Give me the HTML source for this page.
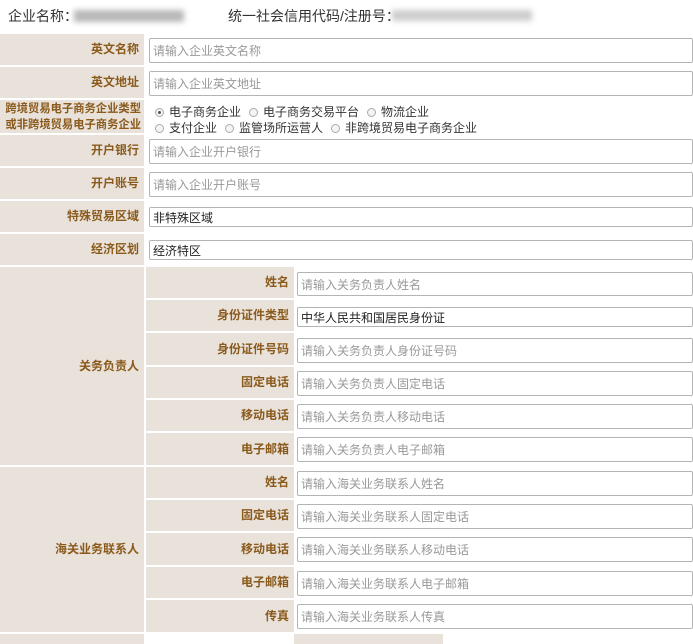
<!DOCTYPE html>
<html><head><meta charset="utf-8"><style>
body{margin:0;width:693px;height:639px;overflow:hidden;background:#fff;font-family:"Liberation Sans","Noto Sans CJK SC",sans-serif;position:relative}
.a{position:absolute}
.lb{position:absolute;background:#e9e2da;color:#8a5a1c;font-weight:bold;font-size:12px;display:flex;align-items:center;justify-content:flex-end;box-sizing:border-box;padding-right:5px;text-align:right;line-height:17px;white-space:nowrap}
.in{position:absolute;border:1px solid #b4b4b4;box-sizing:border-box;font-size:12px;color:#999;display:flex;align-items:center;padding-left:3px;background:#fff;border-radius:2px}
.v{color:#222}
.r{display:inline-block;width:9px;height:9px;border:1px solid #aaa;border-radius:50%;background:#f4f4f4;vertical-align:-1px;margin-right:5px;box-sizing:border-box;position:relative}
.r.on::after{content:"";position:absolute;left:2px;top:2px;width:3px;height:3px;border-radius:50%;background:#555}
.rt{font-size:12px;color:#333;position:absolute;left:155px;white-space:nowrap}
.rt span{margin-right:8px}
</style></head><body>
<div class="a" style="left:8px;top:6px;font-size:14px;color:#333">企业名称：</div>
<div class="a" style="left:74px;top:10px;width:110px;height:12px;background:#999;filter:blur(3px);opacity:.7"></div>
<div class="a" style="left:228px;top:6px;font-size:14px;color:#333">统一社会信用代码/注册号：</div>
<div class="a" style="left:392px;top:10px;width:140px;height:11px;background:#aaa;filter:blur(3px);opacity:.6"></div>

<div class="lb" style="left:0;top:34px;width:144px;height:31px">英文名称</div>
<div class="in" style="left:149px;top:38px;width:544px;height:25px">请输入企业英文名称</div>
<div class="lb" style="left:0;top:67px;width:144px;height:31px">英文地址</div>
<div class="in" style="left:149px;top:71px;width:544px;height:25px">请输入企业英文地址</div>
<div class="lb" style="left:0;top:100px;width:144px;height:33px;padding-right:3px;font-size:11.3px;line-height:16px">跨境贸易电子商务企业类型<br>或非跨境贸易电子商务企业</div>
<div class="rt" style="top:103px"><span><i class="r on"></i>电子商务企业</span><span><i class="r"></i>电子商务交易平台</span><span><i class="r"></i>物流企业</span></div>
<div class="rt" style="top:119px"><span><i class="r"></i>支付企业</span><span><i class="r"></i>监管场所运营人</span><span><i class="r"></i>非跨境贸易电子商务企业</span></div>
<div class="lb" style="left:0;top:135px;width:144px;height:31px">开户银行</div>
<div class="in" style="left:149px;top:139px;width:544px;height:25px">请输入企业开户银行</div>
<div class="lb" style="left:0;top:168px;width:144px;height:31px">开户账号</div>
<div class="in" style="left:149px;top:172px;width:544px;height:25px">请输入企业开户账号</div>
<div class="lb" style="left:0;top:201px;width:144px;height:31px">特殊贸易区域</div>
<div class="in v" style="left:149px;top:207px;width:544px;height:20px">非特殊区域</div>
<div class="lb" style="left:0;top:234px;width:144px;height:31px">经济区划</div>
<div class="in v" style="left:149px;top:240px;width:544px;height:20px">经济特区</div>

<div class="lb" style="left:0;top:267px;width:144px;height:198px">关务负责人</div>
<div class="lb" style="left:146px;top:267px;width:148px;height:31px">姓名</div>
<div class="in" style="left:297px;top:272px;width:396px;height:24px">请输入关务负责人姓名</div>
<div class="lb" style="left:146px;top:300px;width:148px;height:31px">身份证件类型</div>
<div class="in v" style="left:297px;top:307px;width:396px;height:20px">中华人民共和国居民身份证</div>
<div class="lb" style="left:146px;top:333px;width:148px;height:32px">身份证件号码</div>
<div class="in" style="left:297px;top:338px;width:396px;height:25px">请输入关务负责人身份证号码</div>
<div class="lb" style="left:146px;top:367px;width:148px;height:31px">固定电话</div>
<div class="in" style="left:297px;top:371px;width:396px;height:25px">请输入关务负责人固定电话</div>
<div class="lb" style="left:146px;top:400px;width:148px;height:31px">移动电话</div>
<div class="in" style="left:297px;top:404px;width:396px;height:25px">请输入关务负责人移动电话</div>
<div class="lb" style="left:146px;top:433px;width:148px;height:32px">电子邮箱</div>
<div class="in" style="left:297px;top:437px;width:396px;height:25px">请输入关务负责人电子邮箱</div>

<div class="lb" style="left:0;top:467px;width:144px;height:165px">海关业务联系人</div>
<div class="lb" style="left:146px;top:467px;width:148px;height:31px">姓名</div>
<div class="in" style="left:297px;top:471px;width:396px;height:25px">请输入海关业务联系人姓名</div>
<div class="lb" style="left:146px;top:500px;width:148px;height:31px">固定电话</div>
<div class="in" style="left:297px;top:504px;width:396px;height:25px">请输入海关业务联系人固定电话</div>
<div class="lb" style="left:146px;top:533px;width:148px;height:32px">移动电话</div>
<div class="in" style="left:297px;top:537px;width:396px;height:25px">请输入海关业务联系人移动电话</div>
<div class="lb" style="left:146px;top:567px;width:148px;height:31px">电子邮箱</div>
<div class="in" style="left:297px;top:571px;width:396px;height:25px">请输入海关业务联系人电子邮箱</div>
<div class="lb" style="left:146px;top:600px;width:148px;height:32px">传真</div>
<div class="in" style="left:297px;top:604px;width:396px;height:25px">请输入海关业务联系人传真</div>

<div class="lb" style="left:0;top:634px;width:144px;height:10px"></div>
<div class="lb" style="left:294px;top:634px;width:149px;height:10px"></div>
</body></html>
